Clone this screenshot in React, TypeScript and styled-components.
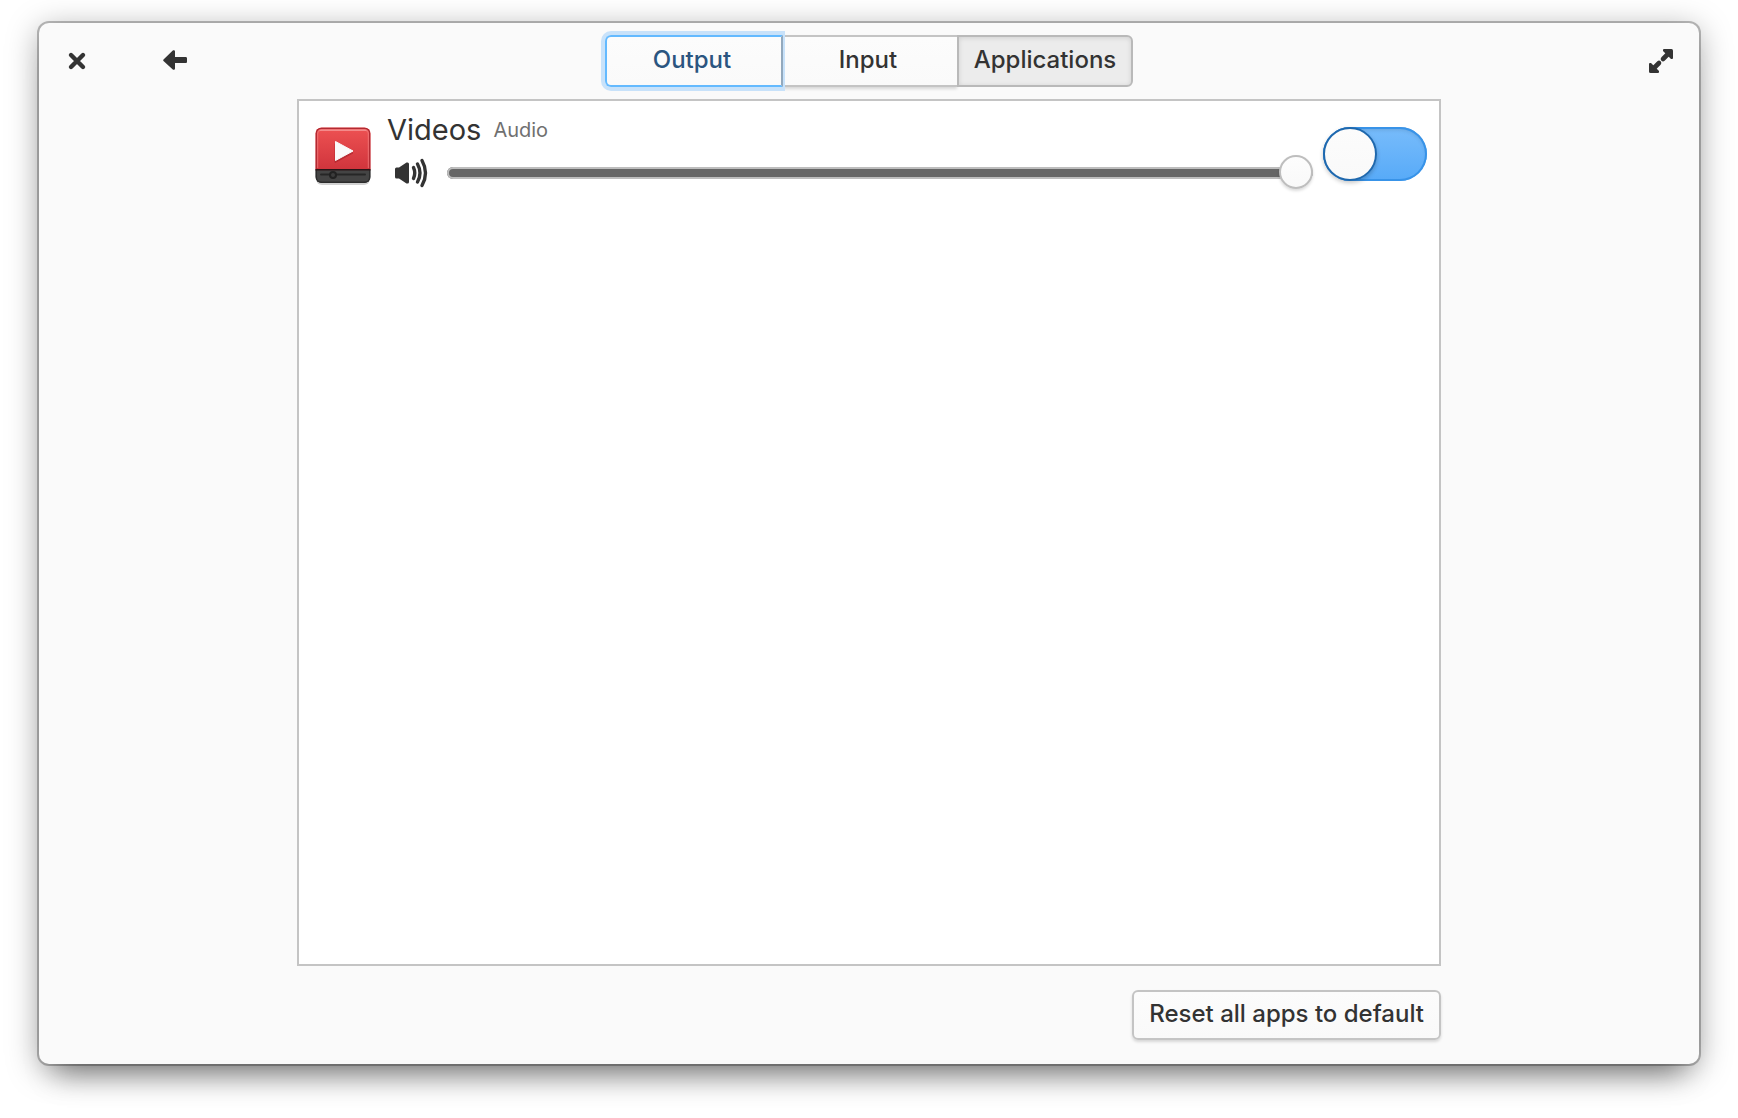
import React, { useState } from "react";
import styled, { createGlobalStyle, css } from "styled-components";

const ink = "#333333";
const line = "#c4c4c4";

const GlobalStyle = createGlobalStyle`
  *, *::before, *::after { box-sizing: border-box; }
  body {
    margin: 0;
    background: #ffffff;
    color: ${ink};
    font-family: Inter, "Open Sans", sans-serif;
    font-size: 24px;
    line-height: 32px;
  }
  button, input { font: inherit; color: inherit; margin: 0; }
`;

const Desktop = styled.div`
  display: flex;
  min-height: 100vh;
  padding: 23px 39px 54px;
  overflow: hidden;
`;

const Window = styled.main`
  flex: 1;
  display: flex;
  flex-direction: column;
  background: #fafafa;
  border-radius: 10px;
  box-shadow:
    0 0 0 2px rgba(0, 0, 0, 0.25),
    0 28px 28px -18px rgba(0, 0, 0, 0.35),
    0 6px 32px rgba(0, 0, 0, 0.35);
`;

const Header = styled.header`
  display: grid;
  grid-template-columns: 1fr auto 1fr;
  align-items: center;
  padding: 12px;
`;

const HeaderSide = styled.div<{ $end?: boolean }>`
  display: flex;
  gap: 46px;
  justify-content: ${(p) => (p.$end ? "flex-end" : "flex-start")};
`;

const IconButton = styled.button`
  display: grid;
  place-items: center;
  width: 52px;
  height: 52px;
  padding: 0;
  border: 0;
  background: none;
`;

const Tabs = styled.nav`
  display: flex;
`;

const Tab = styled.button<{ $focused?: boolean; $active?: boolean }>`
  width: 174px;
  height: 52px;
  padding: 0 4px 2px 0;
  border: 2px solid ${line};
  border-width: 2px 0;
  background: linear-gradient(#fcfcfc, #fafafa);
  font-weight: 500;
  box-shadow: 0 2px 3px rgba(0, 0, 0, 0.14);
  outline: none;

  &:first-child {
    width: 178px;
    border-width: 2px;
    border-radius: 6px 0 0 6px;
  }
  &:last-child {
    width: 176px;
    padding-right: 0;
    border-width: 2px;
    border-radius: 0 6px 6px 0;
  }
  ${(p) =>
    p.$focused &&
    css`
      position: relative;
      border-color: #64baff;
      border-right-color: #93a9bd;
      color: #2b5580;
      box-shadow: 0 0 0 4px #c8e2fa;
      clip-path: inset(-4px -2px -4px -4px);
    `}
  ${(p) =>
    p.$active &&
    css`
      border-color: #b9b9b9;
      background: #ececec;
      box-shadow: inset 0 1px 5px rgba(0, 0, 0, 0.12);
    `}
`;

const Content = styled.div`
  flex: 1;
  display: flex;
  flex-direction: column;
  align-items: flex-end;
  gap: 24px;
  width: calc(100% - 48px);
  max-width: 1144px;
  margin: 0 auto;
  padding-bottom: 24px;
`;

const AppList = styled.ul`
  flex: 1;
  align-self: stretch;
  margin: 0;
  padding: 0;
  list-style: none;
  border: 2px solid ${line};
  background: #ffffff;
`;

const AppRow = styled.li`
  display: flex;
  align-items: center;
  padding: 12px;
`;

const Controls = styled.div`
  flex: 1;
  min-width: 0;
  margin: 0 10px 0 12px;
`;

const Titles = styled.div`
  display: flex;
  align-items: center;
  gap: 12px;
  height: 38px;
  padding-bottom: 4px;
`;

const AppName = styled.span`
  font-size: 29px;
  line-height: 34px;
`;

const StreamName = styled.span`
  color: #707070;
  font-size: 20px;
  line-height: 28px;
`;

const VolumeRow = styled.div`
  display: flex;
  align-items: center;
  gap: 12px;
  height: 44px;
`;

const Slider = styled.input`
  flex: 1;
  min-width: 0;
  height: 34px;
  appearance: none;
  background: none;
  outline: none;

  &::-webkit-slider-runnable-track {
    height: 12px;
    border-radius: 6px;
    background: #666666;
    box-shadow: inset 0 0 0 2px #bdbdbd;
  }
  &::-webkit-slider-thumb {
    appearance: none;
    width: 34px;
    height: 34px;
    margin-top: -12px;
    border: 2px solid #bebebe;
    border-radius: 50%;
    background: linear-gradient(#fdfdfd, #f9f9f9);
    box-shadow: 0 2px 3px rgba(0, 0, 0, 0.14);
  }
`;

const Switch = styled.input`
  flex: none;
  display: flex;
  width: 104px;
  height: 54px;
  appearance: none;
  border-radius: 27px;
  background: linear-gradient(#78bcfb, #57aaf8);
  box-shadow: inset 0 0 0 2px #3893e8, inset 0 3px 4px rgba(0, 0, 0, 0.12);

  &::before {
    content: "";
    width: 54px;
    height: 54px;
    border: 2px solid #1f68ad;
    border-radius: 50%;
    background: linear-gradient(#fcfcfc, #f9f9f9);
    box-shadow: 0 2px 4px rgba(0, 0, 0, 0.22);
  }
`;

const ResetButton = styled.button`
  height: 50px;
  padding: 0 15px 2px;
  border: 2px solid ${line};
  border-radius: 6px;
  background: linear-gradient(#fcfcfc, #f9f9f9);
  font-weight: 500;
  box-shadow: 0 2px 3px rgba(0, 0, 0, 0.14);
`;

const CloseIcon = () => (
  <svg width="24" height="24" viewBox="0 0 24 24" aria-hidden="true">
    <path d="M6 6 18 18M18 6 6 18" stroke={ink} strokeWidth="4.4" strokeLinecap="round" />
  </svg>
);

const BackIcon = () => (
  <svg width="24" height="22" viewBox="0 0 24 22" aria-hidden="true">
    <path
      d="M.5 9.4 9.8.6C10.6-.1 12 .3 12 1.5V7h10.5c1 0 1.500.5 1.500 1.500v3c0 1-.5 1.500-1.500 1.500H12v5.500c0 1.200-1.400 1.600-2.200.9L.5 10.900Q-.2 10.200.5 9.400Z"
      fill={ink}
    />
  </svg>
);

const ExpandIcon = () => (
  <svg width="24" height="24" viewBox="0 0 24 24" aria-hidden="true">
    <path d="M15 0h7.500Q24 0 24 1.500V9Q24 10 23 10H22L14 2V1Q14 0 15 0Z" fill={ink} />
    <path d="M9 24H1.500Q0 24 0 22.500V15Q0 14 1 14H2L10 22V23Q10 24 9 24Z" fill={ink} />
    <path d="M14 10 19 5M10 14 5 19" stroke={ink} strokeWidth="4.6" strokeLinecap="round" />
  </svg>
);

const SpeakerIcon = () => (
  <svg width="48" height="44" viewBox="0 0 48 44" aria-hidden="true">
    <path
      d="M9.500 16.500H12L19.500 11.600Q22 10.800 22 13V31Q22 33.200 19.500 32.400L12 27.500H9.500Q8 27.500 8 26V18Q8 16.500 9.500 16.500Z"
      fill={ink}
    />
    <path
      d="M26.500 16.500Q29 22 26.500 27.500M30.500 13Q35.500 22 30.500 31M35 9.500Q42 22 35 34.500"
      fill="none"
      stroke={ink}
      strokeWidth="3.4"
      strokeLinecap="round"
    />
  </svg>
);

const VideosIcon = () => (
  <svg width="64" height="64" viewBox="0 0 64 64" aria-hidden="true">
    <defs>
      <linearGradient id="screen" x1="0" y1="0" x2="0" y2="1">
        <stop offset="0" stopColor="#ee5253" />
        <stop offset="1" stopColor="#d0343c" />
      </linearGradient>
      <clipPath id="body">
        <rect x="4.500" y="5.500" width="55" height="55.500" rx="6" />
      </clipPath>
    </defs>
    <rect x="5" y="8" width="54" height="55" rx="6" fill="#000" opacity="0.18" />
    <g clipPath="url(#body)">
      <rect x="4" y="5" width="56" height="43" fill="url(#screen)" />
      <rect x="4" y="47.500" width="56" height="14" fill="#444444" />
      <path d="M6.500 46V12Q6.500 8 11 8H53Q57.500 8 57.500 12V46" fill="none" stroke="#f68a8a" strokeOpacity="0.5" strokeWidth="1.500" />
      <path d="M8.500 8.300H55.500" stroke="#f79a9a" strokeOpacity="0.7" strokeWidth="1.500" />
      <path d="M5.200 47V11.500Q5.200 6.200 10.500 6.200H53.500Q58.800 6.200 58.800 11.500V47" fill="none" stroke="#b12a32" strokeWidth="1.600" />
      <path d="M5.200 48V55Q5.200 60.300 10.500 60.300H53.500Q58.800 60.300 58.800 55V48" fill="none" stroke="#2c2c2c" strokeWidth="1.600" />
      <path d="M4 47.800H60" stroke="#2a1416" strokeWidth="1.500" />
    </g>
    <path d="M10 52.500H54" stroke="#262626" strokeWidth="2" strokeLinecap="round" />
    <circle cx="22" cy="53" r="3" fill="#3c3c3c" stroke="#222222" strokeWidth="2" />
    <path d="M24 21.500V40.500L42 31Z" fill="#9c1d25" opacity="0.5" stroke="#9c1d25" strokeLinejoin="round" />
    <path d="M24.500 19.500V38.500L42 29Z" fill="#fafafa" stroke="#fafafa" strokeLinejoin="round" />
  </svg>
);

export default function App() {
  const [volume, setVolume] = useState(100);
  const [muted, setMuted] = useState(false);

  return (
    <>
      <GlobalStyle />
      <Desktop>
        <Window>
          <Header>
            <HeaderSide>
              <IconButton type="button" aria-label="Close"><CloseIcon /></IconButton>
              <IconButton type="button" aria-label="Back"><BackIcon /></IconButton>
            </HeaderSide>
            <Tabs aria-label="Sound sections">
              <Tab type="button" $focused>Output</Tab>
              <Tab type="button">Input</Tab>
              <Tab type="button" $active aria-current="page">Applications</Tab>
            </Tabs>
            <HeaderSide $end>
              <IconButton type="button" aria-label="Maximize"><ExpandIcon /></IconButton>
            </HeaderSide>
          </Header>
          <Content>
            <AppList>
              <AppRow>
                <VideosIcon />
                <Controls>
                  <Titles>
                    <AppName>Videos</AppName>
                    <StreamName>Audio</StreamName>
                  </Titles>
                  <VolumeRow>
                    <SpeakerIcon />
                    <Slider
                      type="range"
                      aria-label="Videos volume"
                      min={0}
                      max={100}
                      value={volume}
                      onChange={(e) => setVolume(Number(e.target.value))}
                    />
                  </VolumeRow>
                </Controls>
                <Switch
                  type="checkbox"
                  role="switch"
                  aria-label="Mute Videos"
                  checked={muted}
                  onChange={(e) => setMuted(e.target.checked)}
                />
              </AppRow>
            </AppList>
            <ResetButton type="button">Reset all apps to default</ResetButton>
          </Content>
        </Window>
      </Desktop>
    </>
  );
}
